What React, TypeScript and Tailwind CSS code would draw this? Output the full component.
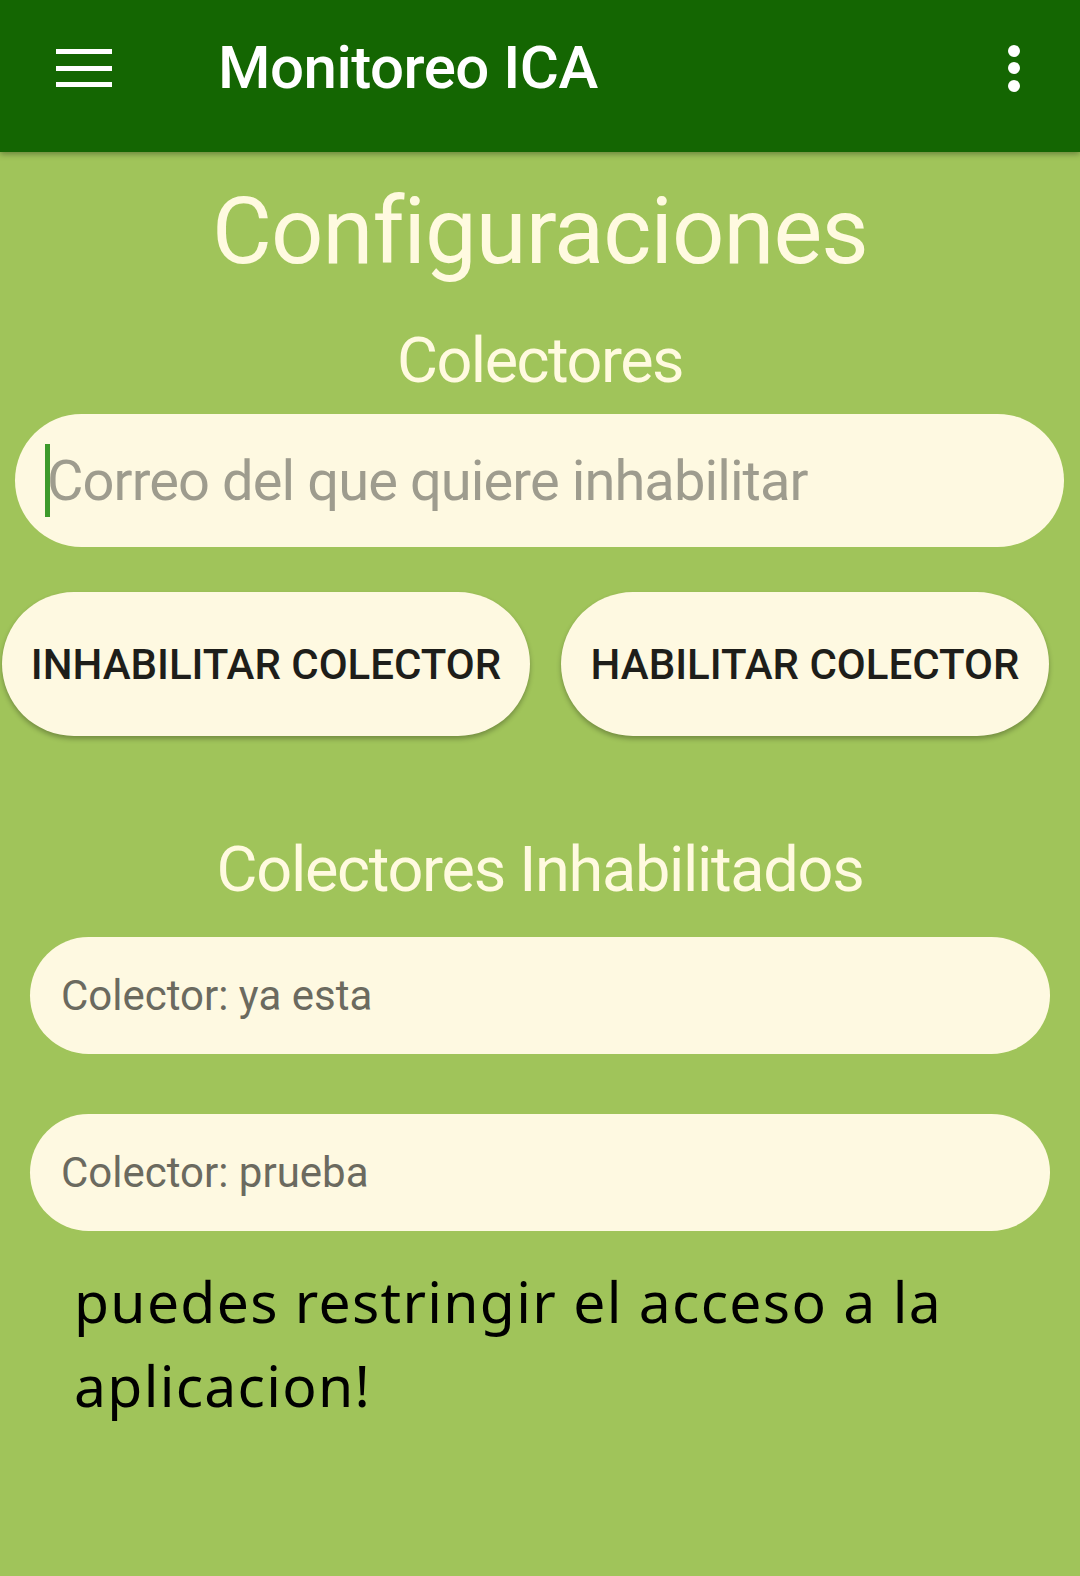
import React from "react";

export default function App() {
  return (
    <div className="w-[1080px] h-[1576px] bg-[#a0c45a] flex flex-col overflow-hidden" style={{ fontFamily: "Roboto, 'Liberation Sans', sans-serif" }}>
      <header className="relative z-10 h-[152px] shrink-0 bg-[#146602] flex items-center pb-[16px] shadow-[0_2px_6px_rgba(0,0,0,0.35)]">
        <div className="ml-[56px] w-[56px] h-[38px] flex flex-col justify-between">
          <div className="h-[5px] bg-white" />
          <div className="h-[5px] bg-white" />
          <div className="h-[5px] bg-white" />
        </div>
        <div className="ml-[106px] text-white text-[60px] font-medium leading-none tracking-[-0.5px]">Monitoreo ICA</div>
        <div className="ml-auto mr-[60px] flex flex-col gap-[5.5px]">
          <div className="w-[12px] h-[12px] rounded-full bg-white" />
          <div className="w-[12px] h-[12px] rounded-full bg-white" />
          <div className="w-[12px] h-[12px] rounded-full bg-white" />
        </div>
      </header>

      <h1 className="mt-[26px] text-center text-[92px] leading-[108px] text-[#fffae0] font-normal tracking-[-0.9px]">Configuraciones</h1>
      <h2 className="mt-[38px] text-center text-[63px] leading-[74px] text-[#fffae0] font-normal tracking-[-1.5px]">Colectores</h2>

      <div className="mt-[16px] ml-[15px] w-[1049px] h-[133px] rounded-full bg-[#fef9e1] flex items-center pl-[30px]">
        <div className="w-[5px] h-[73px] bg-[#3d9a2b]" />
        <span className="-ml-[3px] text-[56px] text-[#9e9c8e] leading-none tracking-[-0.9px]">Correo del que quiere inhabilitar</span>
      </div>

      <div className="mt-[45px] flex">
        <button className="ml-[2px] w-[528px] h-[144px] rounded-[72px] bg-[#fef9e1] shadow-[0_3px_5px_rgba(0,0,0,0.28)] text-[42px] font-medium text-[#1e1e1a] flex items-center justify-center">
          INHABILITAR COLECTOR
        </button>
        <button className="ml-[31px] w-[488px] h-[144px] rounded-[72px] bg-[#fef9e1] shadow-[0_3px_5px_rgba(0,0,0,0.28)] text-[42px] font-medium text-[#1e1e1a] flex items-center justify-center">
          HABILITAR COLECTOR
        </button>
      </div>

      <h2 className="mt-[97px] text-center text-[63px] leading-[74px] text-[#fffae0] font-normal tracking-[-1.3px]">Colectores Inhabilitados</h2>

      <div className="mt-[30px] ml-[30px] w-[1020px] flex flex-col gap-[60px]">
        <div className="h-[117px] rounded-full bg-[#fef9e1] flex items-center pl-[31px] text-[42px] text-[#6b6a5f]">Colector: ya esta</div>
        <div className="h-[117px] rounded-full bg-[#fef9e1] flex items-center pl-[31px] text-[42px] text-[#6b6a5f]">Colector: prueba</div>
      </div>

      <p className="mt-[28px] ml-[74px] w-[920px] text-[57px] leading-[84px] tracking-[1.3px] text-black" style={{ fontFamily: "'Noto Sans', sans-serif" }}>
        puedes restringir el acceso a la aplicacion!
      </p>
    </div>
  );
}
